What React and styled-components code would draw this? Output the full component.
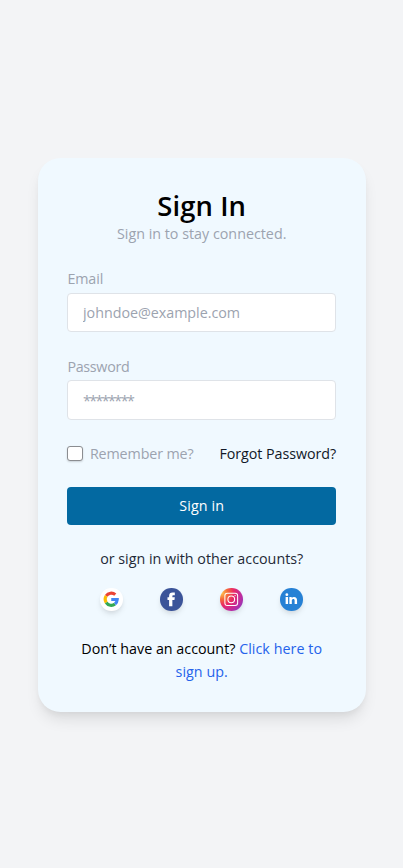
import React from "react";
import styled, { createGlobalStyle } from "styled-components";

const GlobalStyle = createGlobalStyle`
  *, *::before, *::after { box-sizing: border-box; }
  html { font-size: 15px; }
  body {
    margin: 0;
    background: #f3f4f6;
    font-family: "Open Sans", "Noto Sans", sans-serif;
    font-size: 14.3px;
    line-height: 22.5px;
    color: #000;
  }
`;

const Page = styled.main`
  min-height: 100vh;
  display: flex;
  align-items: flex-start;
  justify-content: center;
  padding: 157.5px 37px 0 37.5px;
`;

const Card = styled.form`
  width: 100%;
  height: 554.5px;
  padding: 30px 30px 30px 29.9px;
  border-radius: 22.5px;
  background: #f0f9ff;
  box-shadow: 0 10px 15px -3px rgba(0, 0, 0, 0.1), 0 4px 6px -2px rgba(0, 0, 0, 0.05);
`;

const Header = styled.header`
  text-align: center;
  margin-bottom: 24px;
`;

const Title = styled.h1`
  margin: 0;
  padding: 1px 0;
  font-size: 27.4px;
  font-weight: 600;
  line-height: 34px;
  letter-spacing: 0.1px;
`;

const Text = styled.span`
  color: ${(p) => p.$color || "#000"};
  letter-spacing: ${(p) => p.$track || 0}px;
  white-space: nowrap;
`;

const Subtitle = styled.div`
  line-height: 20px;
`;

const Field = styled.label`
  display: block;
  height: 65px;
  margin-bottom: 22.7px;
`;

const PasswordField = styled(Field)`
  padding-top: 0.7px;
`;

const Input = styled.input`
  display: block;
  width: 100%;
  height: 39.5px;
  margin-top: 2.6px;
  padding: 7.5px 14.6px;
  border: 1px solid #dfe3e8;
  border-radius: 4px;
  background: #fff;
  font: inherit;
  outline: none;
  letter-spacing: ${(p) => p.$track}px;
  &::placeholder { color: #9ca3af; opacity: 1; }
  ${PasswordField} & { margin-top: 1.9px; }
`;

const Options = styled.div`
  display: flex;
  align-items: center;
  justify-content: space-between;
  height: 22.5px;
`;

const Remember = styled.label`
  display: flex;
  align-items: center;
  gap: 7px;
`;

const Checkbox = styled.input`
  appearance: none;
  width: 15.5px;
  height: 15.5px;
  margin: 0 0 1px;
  border: 1px solid #8b8d91;
  border-radius: 3px;
  background: #fff;
  box-shadow: 0 1px 2px rgba(0, 0, 0, 0.16);
`;

const Submit = styled.button`
  display: block;
  width: 100%;
  height: 37.5px;
  margin: 22px 0 23px;
  padding: 1px 0 0;
  border: 0;
  border-radius: 4px;
  background: #0369a1;
  font: inherit;
`;

const Centered = styled.div`
  text-align: center;
`;

const Signup = styled(Centered)`
  line-height: 23px;
`;

const Socials = styled.div`
  display: flex;
  justify-content: center;
  gap: 37.5px;
  margin: 18px 0 26.4px;
`;

const Social = styled.a`
  display: flex;
  width: 22.5px;
  height: 22.5px;
  border-radius: 50%;
  background: ${(p) => p.$fill};
  box-shadow: 0 4px 6px -1px rgba(0, 0, 0, 0.1), 0 2px 4px -1px rgba(0, 0, 0, 0.06);
  svg { width: 100%; height: 100%; }
`;

const instagramFill =
  "radial-gradient(circle at 8% 22%, #ffc04d 0%, #f56a38 22%, #e92966 44%, #be2da0 70%, #6d3fd0 100%)";

function App() {
  return (
    <>
      <GlobalStyle />
      <Page>
        <Card>
          <Header>
            <Title>Sign In</Title>
            <Subtitle><Text $color="#9ca3af">Sign in to stay connected.</Text></Subtitle>
          </Header>
          <Field>
            <Text $color="#9ca3af" $track={-0.1}>Email</Text>
            <Input type="email" placeholder="johndoe@example.com" $track={-0.02} />
          </Field>
          <PasswordField>
            <Text $color="#9ca3af" $track={-0.3}>Password</Text>
            <Input type="password" placeholder="********" $track={-1.6} />
          </PasswordField>
          <Options>
            <Remember>
              <Checkbox type="checkbox" />
              <Text $color="#9ca3af" $track={-0.12}>Remember me?</Text>
            </Remember>
            <Text $color="#111827" $track={-0.07}>Forgot Password?</Text>
          </Options>
          <Submit type="button"><Text $color="#fff" $track={0.1}>Sign in</Text></Submit>
          <Centered><Text $color="#1f2937">or sign in with other accounts?</Text></Centered>
          <Socials>
            <Social $fill="#fff" aria-label="Google">
              <svg viewBox="0 0 24 24" fill="none" strokeWidth="3.3">
                <path d="M6.6 8.4A6.5 6.5 0 0 1 16.3 7.1" stroke="#ea4335" />
                <path d="M6.6 8.4A6.5 6.5 0 0 0 6.6 15.6" stroke="#fbbc05" />
                <path d="M6.6 15.6A6.5 6.5 0 0 0 16 17.1" stroke="#34a853" />
                <path d="M12 12.3H18.4A6.5 6.5 0 0 1 16 17.1" stroke="#4285f4" />
              </svg>
            </Social>
            <Social $fill="#3b5499" aria-label="Facebook">
              <svg viewBox="0 0 24 24" fill="#fff">
                <path d="M9.7 19.5V12.9H8V9.9h1.7V8.5C9.7 6 11 4.8 13.4 4.8h2.4v2.9h-1.5c-.9 0-1.1.4-1.1 1.2v1h2.6l-.4 3h-2.2v6.6z" />
              </svg>
            </Social>
            <Social $fill={instagramFill} aria-label="Instagram">
              <svg viewBox="0 0 24 24" fill="none" stroke="#fff" strokeWidth="1.1">
                <rect x="5.2" y="5.5" width="13.6" height="13.2" rx="2.6" />
                <circle cx="12" cy="12.1" r="3.6" />
                <circle cx="16.1" cy="8.1" r=".7" fill="#fff" stroke="none" />
              </svg>
            </Social>
            <Social $fill="#2681d5" aria-label="LinkedIn">
              <svg viewBox="0 0 24 24" fill="#fff">
                <path d="M6 9.7h2.6v7.3H6zM10 9.7h2.5v1c.5-.8 1.3-1.2 2.4-1.2 2.3 0 3.3 1.4 3.3 3.7V17h-2.6v-3.4c0-1.1-.4-1.8-1.4-1.8-1.1 0-1.6.8-1.6 1.8V17H10z" />
                <circle cx="7.3" cy="7.1" r="1.5" />
              </svg>
            </Social>
          </Socials>
          <Signup>
            <Text>Don’t have an account?</Text>{" "}
            <Text $color="#2563eb" $track={0.04}>Click here to<br />sign up.</Text>
          </Signup>
        </Card>
      </Page>
    </>
  );
}

export default App;
